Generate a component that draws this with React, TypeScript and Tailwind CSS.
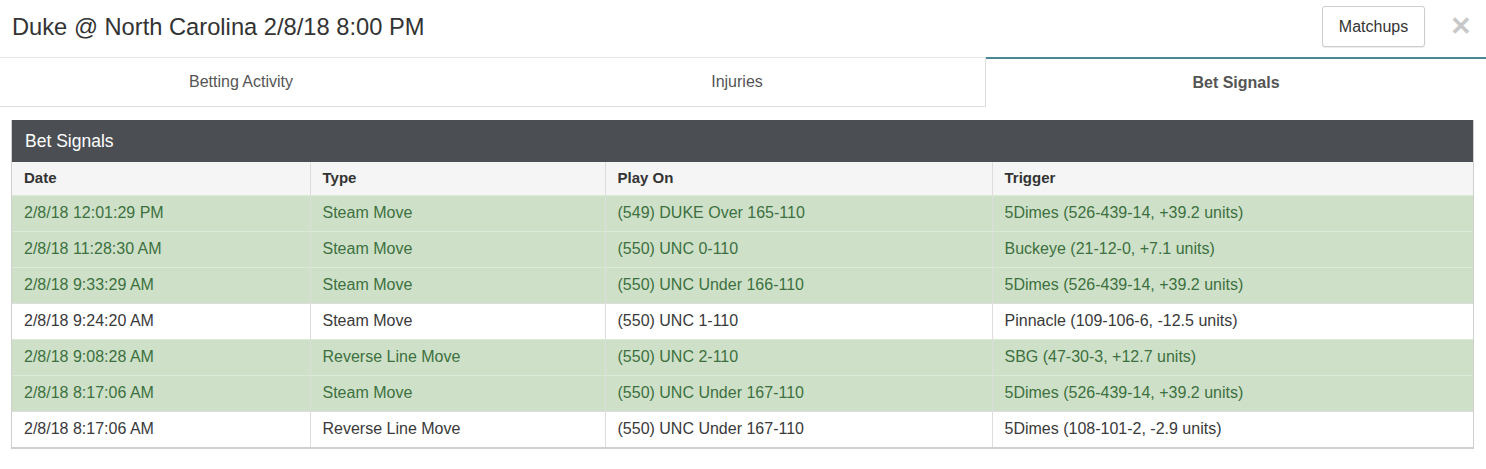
import React from "react";

type Row = { date: string; type: string; play: string; trigger: string; hit: boolean };

const rows: Row[] = [
  { date: "2/8/18 12:01:29 PM", type: "Steam Move", play: "(549) DUKE Over 165-110", trigger: "5Dimes (526-439-14, +39.2 units)", hit: true },
  { date: "2/8/18 11:28:30 AM", type: "Steam Move", play: "(550) UNC 0-110", trigger: "Buckeye (21-12-0, +7.1 units)", hit: true },
  { date: "2/8/18 9:33:29 AM", type: "Steam Move", play: "(550) UNC Under 166-110", trigger: "5Dimes (526-439-14, +39.2 units)", hit: true },
  { date: "2/8/18 9:24:20 AM", type: "Steam Move", play: "(550) UNC 1-110", trigger: "Pinnacle (109-106-6, -12.5 units)", hit: false },
  { date: "2/8/18 9:08:28 AM", type: "Reverse Line Move", play: "(550) UNC 2-110", trigger: "SBG (47-30-3, +12.7 units)", hit: true },
  { date: "2/8/18 8:17:06 AM", type: "Steam Move", play: "(550) UNC Under 167-110", trigger: "5Dimes (526-439-14, +39.2 units)", hit: true },
  { date: "2/8/18 8:17:06 AM", type: "Reverse Line Move", play: "(550) UNC Under 167-110", trigger: "5Dimes (108-101-2, -2.9 units)", hit: false },
];

export default function App() {
  return (
    <div className="w-[1486px] h-[469px] bg-white text-[#333] overflow-hidden" style={{ fontFamily: '"Liberation Sans", Arial, sans-serif' }}>
      {/* Header */}
      <div className="h-[58px] flex items-center border-b border-[#e5e5e5] pl-[12px] pr-[14px]">
        <h1 className="text-[23.7px] leading-none text-[#333] flex-1 -mt-[1px]">Duke @ North Carolina 2/8/18 8:00 PM</h1>
        <button className="h-[41px] w-[103px] border border-[#ccc] rounded-[3px] bg-white text-[16px] text-[#333] shadow-[0_1px_1px_rgba(0,0,0,0.08)] -mt-[4px]">Matchups</button>
        <span className="ml-[25px] w-[22px] text-[#c8c8c8] text-[26px] font-bold leading-none -mt-[6px]">✕</span>
      </div>
      {/* Tabs */}
      <div className="flex h-[49px] text-[16px]">
        <div className="w-[493px] flex items-center justify-center border-b border-[#ddd] text-[#555] pb-[1px] pr-[11px]">Betting Activity</div>
        <div className="w-[493px] flex items-center justify-center border-b border-r border-[#ddd] text-[#555] pb-[1px] pr-[4px]">Injuries</div>
        <div className="flex-1 flex items-center justify-center border-t-[2px] border-[#4c8796] -mt-[1px] font-bold text-[#555]">Bet Signals</div>
      </div>
      {/* Panel */}
      <div className="mt-[13px] ml-[11px] w-[1463px] border-l border-r border-b-[2px] border-[#cfcfcf]">
        <div className="h-[42px] bg-[#4b4f54] text-white text-[17.5px] flex items-center pl-[13px]">Bet Signals</div>
        <table className="w-full border-collapse text-[16px]">
          <colgroup>
            <col className="w-[298px]" />
            <col className="w-[295px]" />
            <col className="w-[387px]" />
            <col />
          </colgroup>
          <thead>
            <tr className="h-[33px] bg-[#f5f5f5] text-[#333]">
              <th className="text-left font-bold pl-[12px] border-r border-[#ddd] text-[15px]">Date</th>
              <th className="text-left font-bold pl-[12px] border-r border-[#ddd] text-[15px]">Type</th>
              <th className="text-left font-bold pl-[12px] border-r border-[#ddd] text-[15px]">Play On</th>
              <th className="text-left font-bold pl-[12px] text-[15px]">Trigger</th>
            </tr>
          </thead>
          <tbody>
            {rows.map((r, i) => (
              <tr key={i} className={r.hit ? "h-[36px] bg-[#cee1c8] text-[#3d7040] border-t border-[#dde9d9]" : "h-[36px] bg-white text-[#3a3a3a] border-t border-[#ddd]"}>
                <td className="pl-[12px] border-r border-[#ddd]">{r.date}</td>
                <td className="pl-[12px] border-r border-[#ddd]">{r.type}</td>
                <td className="pl-[12px] border-r border-[#ddd]">{r.play}</td>
                <td className="pl-[12px]">{r.trigger}</td>
              </tr>
            ))}
          </tbody>
        </table>
      </div>
    </div>
  );
}
